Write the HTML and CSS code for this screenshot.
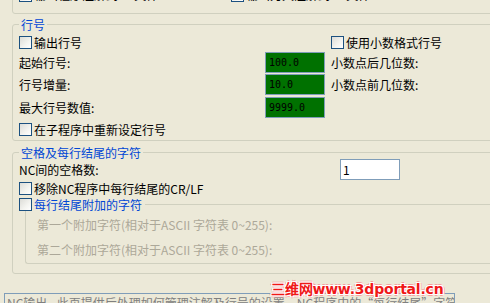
FILE: index.html
```html
<!DOCTYPE html>
<html lang="zh-CN">
<head>
<meta charset="utf-8">
<title>NC输出</title>
<link rel="stylesheet" href="styles.css">
</head>
<body>
<div class="page">
  <div class="prev">
    <div class="prev-row">
      <label class="chk"><span class="box"></span><span class="up">输出程序注解到NC文件</span></label>
      <label class="chk"><span class="box"></span><span class="up">输出刀具注解到NC文件</span></label>
    </div>
  </div>

  <fieldset class="grp g1">
    <legend>行号</legend>
    <div class="g1-grid">
      <label class="chk c1"><span class="box"></span>输出行号</label>
      <label class="chk c3"><span class="box"></span>使用小数格式行号</label>

      <span class="lbl c1">起始行号:</span>
      <span class="num">100.0</span>
      <span class="lbl">小数点后几位数:</span>

      <span class="lbl c1">行号增量:</span>
      <span class="num">10.0</span>
      <span class="lbl">小数点前几位数:</span>

      <span class="lbl c1">最大行号数值:</span>
      <span class="num">9999.0</span>
      <span></span>

      <label class="chk c1 span3"><span class="box"></span>在子程序中重新设定行号</label>
    </div>
  </fieldset>

  <fieldset class="grp g2">
    <legend>空格及每行结尾的字符</legend>
    <div class="nc-row">
      <span class="lbl">NC间的空格数:</span>
      <span class="txt">1</span>
    </div>
    <label class="chk row2"><span class="box"></span>移除NC程序中每行结尾的CR/LF</label>
    <div class="sub">
      <div class="sub-head">
        <label class="chk blue"><span class="box"></span>每行结尾附加的字符</label>
        <span class="sub-line"></span>
      </div>
      <div class="sub-body">
        <span class="dis">第一个附加字符(相对于ASCII 字符表 0~255):</span>
        <span class="dis">第二个附加字符(相对于ASCII 字符表 0~255):</span>
      </div>
    </div>
  </fieldset>

  <div class="help">NC输出 - 此页提供后处理如何管理注解及行号的设置。NC程序中的“每行结尾”字符</div>

  <div class="wm">三维网www.3dportal.cn</div>
</div>
</body>
</html>
```
FILE: styles.css
```css
html, body {
  margin: 0;
  padding: 0;
}
body {
  background: #ECE9D8;
  font-family: "Noto Sans CJK SC", "Noto Sans", sans-serif;
  font-size: 12px;
  line-height: 13px;
  color: #000;
  width: 490px;
  height: 303px;
  overflow: hidden;
}
.page {
  position: relative;
  height: 303px;
  overflow: hidden;
}

/* XP checkbox */
.chk {
  display: flex;
  align-items: center;
  height: 13px;
  white-space: nowrap;
}
.box {
  flex: none;
  width: 13px;
  height: 13px;
  box-sizing: border-box;
  border: 1px solid #1C5180;
  background: linear-gradient(135deg, #DCDCD7 0%, #F4F4F0 60%, #FFFFFF 100%);
  margin-right: 2px;
}
.blue { color: #0046D5; }

/* previous (cut-off) group */
.prev {
  box-sizing: border-box;
  height: 34px;
  margin: -20px -20px 0 12px;
  border: 1px solid #D0D0BF;
  border-radius: 3px;
  padding: 0 0 11px 6px;
  display: flex;
  align-items: flex-end;
}
.prev-row {
  display: grid;
  grid-template-columns: 212px auto;
}
.up {
  margin-top: -3px;
}

/* group boxes */
.grp {
  margin: 4px -20px 0 12px;
  border: 1px solid #D0D0BF;
  border-radius: 3px;
  padding: 5px 0 4px 6px;
  min-width: 0;
}
.grp legend {
  padding: 0 2px;
  color: #0046D5;
  line-height: 13px;
  height: 13px;
}

.g1-grid {
  display: grid;
  grid-template-columns: 240px 60px 1fr;
  grid-template-rows: 16px 22px 23px 26px 13px;
  column-gap: 6px;
  align-items: start;
}
.c1 { grid-column: 1; }
.c3 { grid-column: 3; }
.span3 { grid-column: 1 / 4; }
.lbl {
  display: flex;
  align-items: center;
  height: 21px;
  white-space: nowrap;
}
.num {
  box-sizing: border-box;
  width: 60px;
  height: 21px;
  border: 1px solid #7F9DB9;
  background: #007100;
  padding-left: 3px;
  font-family: "DejaVu Sans Mono", "Liberation Mono", monospace;
  font-size: 10px;
  line-height: 19px;
  color: #000;
}

.g2 {
  margin-top: 5px;
  padding: 0 0 9px 6px;
}
.nc-row {
  display: grid;
  grid-template-columns: 321px 60px;
  height: 21px;
}
.txt {
  box-sizing: border-box;
  width: 60px;
  height: 21px;
  border: 1px solid #7F9DB9;
  background: #FFFFFF;
  padding-left: 2px;
  line-height: 19px;
}
.row2 { margin-top: 2px; }
.sub { margin-top: 3px; }
.sub-head {
  display: flex;
  align-items: center;
  height: 13px;
}
.sub-line {
  flex: 1;
  height: 0;
  border-top: 1px solid #D0D0BF;
  margin-left: 3px;
}
.sub-body {
  margin-left: 6px;
  border-left: 1px solid #D0D0BF;
  border-bottom: 1px solid #D0D0BF;
  border-bottom-left-radius: 3px;
  padding: 2px 0 3px 11px;
  display: flex;
  flex-direction: column;
  gap: 3px;
}
.dis {
  display: flex;
  align-items: center;
  height: 22px;
  color: #ACA899;
  white-space: nowrap;
}

.help {
  box-sizing: border-box;
  margin: 19px 0 0 4px;
  width: 451px;
  height: 30px;
  border: 1px solid #7F9DB9;
  padding: 2px 2px;
  color: #808080;
  white-space: nowrap;
  overflow: hidden;
}

/* watermark overlay */
.wm {
  position: absolute;
  left: 271px;
  top: 282px;
  font-family: "DejaVu Sans", "Liberation Sans", sans-serif;
  font-weight: bold;
  font-size: 14px;
  line-height: 15px;
  letter-spacing: -0.2px;
  color: #F01818;
  white-space: nowrap;
  text-shadow:
    1px 0 0 #fff, -1px 0 0 #fff, 0 1px 0 #fff, 0 -1px 0 #fff,
    1px 1px 0 #fff, -1px -1px 0 #fff, 1px -1px 0 #fff, -1px 1px 0 #fff,
    2px 0 0 #f4a0a0, -2px 0 0 #f4a0a0, 0 2px 0 #f4a0a0, 0 -2px 0 #f4a0a0;
}
```
